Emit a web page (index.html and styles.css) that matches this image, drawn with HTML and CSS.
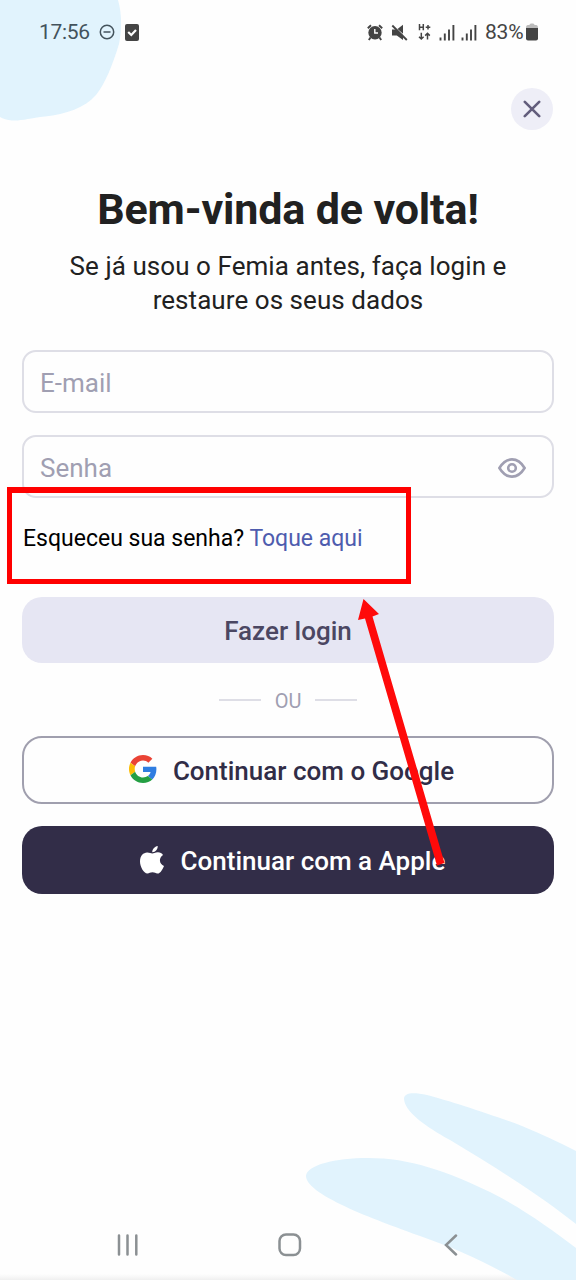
FILE: index.html
```html
<!DOCTYPE html>
<html lang="pt">
<head>
<meta charset="utf-8">
<title>Femia</title>
<link rel="stylesheet" href="styles.css">
</head>
<body>
<div class="screen">
  <svg class="backdrop" viewBox="0 0 576 1280" aria-hidden="true">
    <path d="M0 0H118C122 14 122 30 119 44C113 64 105 84 96 95C85 108 66 114 45 116.500C30 118 22 121 12 120.500C7 120 3 119 0 117Z"/>
    <path d="M404 1099C404 1093 412 1092 427 1095C450 1101 490 1114 522 1126C542 1134 560 1143 576 1151V1224C545 1199 500 1170 450 1140C425 1126 405 1112 404 1099Z"/>
    <path d="M306 1176C307 1165 335 1158 368 1158C410 1158 446 1171 490 1192C522 1208 550 1228 576 1248V1280H517C485 1262 455 1248 420 1236C385 1223 306 1196 306 1176Z"/>
  </svg>

  <header class="status">
    <div class="status-left">
      <span class="clock">17:56</span>
      <svg class="dnd" width="16" height="16" viewBox="0 0 16 16"><circle cx="8" cy="8" r="6.700"/><path d="M4.500 8H11.500"/></svg>
      <svg class="check" width="14" height="17" viewBox="0 0 14 17"><rect width="14" height="17" rx="2" fill="#444"/><path d="M3.200 8L6.300 11L11 6" fill="none" stroke="#fff" stroke-width="2.200"/></svg>
    </div>
    <div class="status-right">
      <svg class="alarm" width="16" height="17" viewBox="0 0 16 17"><circle cx="8" cy="8.800" r="6.700" fill="#444"/><path d="M.8 4.200L4 1.200M15.200 4.200L12 1.200M3.500 13.500L1.800 16M12.500 13.500L14.200 16" stroke="#444" stroke-width="1.900"/><path d="M7.800 5V9H11" fill="none" stroke="#fff" stroke-width="1.400"/></svg>
      <svg class="mute" width="17" height="17" viewBox="0 0 17 17"><path d="M1 5.500H4.500L12 11V16L5.800 11.500H1Z" fill="#444"/><path d="M6.500 5L12 .8V9.800Z" fill="#444"/><path d="M1.300 1.500L15.800 16" stroke="#444" stroke-width="1.900"/></svg>
      <svg class="data" width="13" height="18" viewBox="0 0 13 18"><path d="M1.500 1V7.300M5.300 1V7.300M1.500 4.200H5.300M7.700 4.200H12.300M10 2V6.500M3.300 9.800V16M1 13.700L3.300 16L5.600 13.700M9.500 16.500V10.300M7.200 12.600L9.500 10.300L11.800 12.600" fill="none" stroke="#444" stroke-width="1.500"/></svg>
      <svg class="signal" width="16" height="17" viewBox="0 0 16 17"><path d="M1.500 13.500V16.500M5.800 9.500V16.500M10 5.500V16.500M14.400 1V16.500" stroke="#444" stroke-width="1.900"/></svg>
      <svg class="signal signal-2" width="16" height="17" viewBox="0 0 16 17"><path d="M1.500 13.500V16.500M5.800 9.500V16.500M10 5.500V16.500M14.400 1V16.500" stroke="#444" stroke-width="1.900"/></svg>
      <span class="percent">83%</span>
      <svg class="battery" width="12" height="18" viewBox="0 0 12 18"><path d="M3.500 2Q3.500 .5 5 .5H7Q8.500 .5 8.500 2H10Q12 2 12 5H0Q0 2 2 2Z" fill="#bbb"/><path d="M0 5H12V15.500Q12 17.500 10 17.500H2Q0 17.500 0 15.500Z" fill="#444"/></svg>
    </div>
  </header>

  <div class="toolbar">
    <button class="close" aria-label="Fechar"><svg width="18" height="18" viewBox="0 0 18 18"><path d="M1.800 1.800L16.200 16.200M16.200 1.800L1.800 16.200"/></svg></button>
  </div>

  <main class="content">
    <h1 class="title"><span>Bem-vinda de volta!</span></h1>
    <p class="subtitle">Se já usou o Femia antes, faça login e<br>restaure os seus dados</p>

    <div class="field"><span class="placeholder">E-mail</span></div>
    <div class="field field-password">
      <span class="placeholder">Senha</span>
      <svg class="eye" width="28" height="20" viewBox="0 0 28 20"><path d="M1.400 10C5 4 9 1.400 14 1.400S23 4 26.600 10C23 16 19 18.600 14 18.600S5 16 1.400 10Z"/><circle cx="14" cy="10" r="3.800"/></svg>
    </div>

    <p class="forgot"><span class="question">Esqueceu sua senha?</span> <a class="link">Toque aqui</a></p>

    <button class="btn btn-login"><span>Fazer login</span></button>
    <div class="divider"><i></i><span>OU</span><i></i></div>
    <button class="btn btn-google">
      <svg width="28" height="28" viewBox="0 0 48 48"><path fill="#ea4335" d="M24 9.500c3.540 0 6.710 1.220 9.210 3.600l6.850-6.850C35.900 2.380 30.470 0 24 0 14.620 0 6.510 5.380 2.560 13.220l7.980 6.190C12.430 13.720 17.740 9.500 24 9.500z"/><path fill="#2f7de1" d="M46.980 24.550c0-1.570-.15-3.090-.38-4.550H24v9.020h12.940c-.58 2.960-2.260 5.480-4.780 7.180l7.730 6c4.510-4.180 7.090-10.360 7.090-17.650z"/><path fill="#fbbc05" d="M10.530 28.590c-.48-1.450-.76-2.990-.76-4.590s.27-3.140.76-4.590l-7.980-6.190C.92 16.460 0 20.120 0 24c0 3.880.92 7.540 2.560 10.780l7.970-6.190z"/><path fill="#249f43" d="M24 48c6.480 0 11.930-2.130 15.890-5.810l-7.730-6c-2.150 1.450-4.920 2.300-8.160 2.300-6.260 0-11.570-4.220-13.470-9.910l-7.980 6.190C6.510 42.620 14.620 48 24 48z"/></svg>
      <span>Continuar com o Google</span>
    </button>
    <button class="btn btn-apple">
      <svg width="24" height="28" viewBox="0 0 24 28"><path fill="#fff" d="M17.700 0C18 2.900 15.500 6.200 12.300 6.300C12 3.400 14.700.5 17.700 0ZM12.300 7.500C13.600 7.500 15.300 6.100 18 6.200C20.100 6.300 22 7.200 23 8.900C18.400 11.700 19.200 18 24 19.900C23 22.600 20.500 27.500 17.500 27.500C15.500 27.500 14.800 26.300 12.500 26.300C10.100 26.300 9.300 27.500 7.500 27.500C3.800 27.600 0 20.700 0 15.500C0 9.800 3.500 6.700 7 6.600C9.300 6.500 11 7.500 12.300 7.500Z"/></svg>
      <span>Continuar com a Apple</span>
    </button>
  </main>

  <nav class="navbar">
    <svg width="22" height="22" viewBox="0 0 22 22"><path d="M2 1.500V20.500M10.500 1.500V20.500M19.300 1.500V20.500"/></svg>
    <svg class="home" width="24" height="24" viewBox="0 0 24 24"><rect x="1.500" y="1.500" width="20.500" height="20.500" rx="6.500"/></svg>
    <svg width="14" height="22" viewBox="0 0 14 22"><path d="M12 1.500L2 11L12 20.500"/></svg>
  </nav>

  <div class="highlight"></div>
  <svg class="arrow" viewBox="0 0 576 1280" aria-hidden="true"><path d="M363.500 599L379 614L372.500 616.500L444.500 863L437 865.500L365 618.500L358 620Z"/></svg>
</div>
</body>
</html>
```
FILE: styles.css
```css
* { box-sizing: border-box; }
body { margin: 0; background: #fefefe; font-family: Roboto, sans-serif; }
h1, p { margin: 0; }
button { border: 0; padding: 0; font: inherit; }
svg { display: block; flex: none; }

.screen { position: relative; width: 576px; height: 1280px; overflow: hidden; display: flex; flex-direction: column; background: linear-gradient(#fefefe 1274px, #f0f0f0); isolation: isolate; }
.backdrop { position: absolute; inset: 0; width: 576px; height: 1280px; fill: #e1f3fd; z-index: -1; }

.status { height: 64px; padding: 0 38px 0 39px; display: flex; justify-content: space-between; align-items: center; color: #444; font-size: 21px; line-height: 24px; }
.status-left, .status-right { display: flex; align-items: center; }
.clock { width: 51px; letter-spacing: -.3px; color: #43525c; }
.dnd { margin-left: 9px; fill: none; stroke: #43525c; stroke-width: 1.500; }
.check { margin-left: 10px; }
.alarm { margin-right: 1px; }
.mute { margin-left: 7px; }
.data { margin-left: 10px; }
.signal { margin-left: 8px; }
.signal-2 { margin-left: 6px; }
.percent { margin-left: 8px; width: 38px; letter-spacing: -.2px; }
.battery { margin-left: 3px; }

.toolbar { padding: 24px 23px 0; display: flex; justify-content: flex-end; }
.close { width: 42px; height: 42px; border-radius: 50%; background: #eeeef7; display: grid; place-items: center; }
.close path { stroke: #625d7c; stroke-width: 2.600; stroke-linecap: round; }

.content { padding: 53px 22px 0; display: flex; flex-direction: column; }
.title { text-align: center; font-size: 43px; line-height: 52px; font-weight: 700; letter-spacing: -.15px; color: #212121; white-space: nowrap; }
.subtitle { margin-top: 14px; text-align: center; font-size: 26px; line-height: 34px; letter-spacing: .06px; color: #212121; white-space: nowrap; }

.field { margin-top: 33px; height: 63px; border: 2px solid #dedee6; border-radius: 14px; padding: 2px 26px 0 16px; display: flex; align-items: center; justify-content: space-between; background: #fefefe; }
.field-password { margin-top: 22px; }
.placeholder { font-size: 26px; color: #a09fb2; }
.eye { fill: none; stroke: #a09fb2; stroke-width: 2.600; }

.forgot { margin-top: 26px; padding-left: 1px; font-size: 23px; line-height: 30px; color: #000; white-space: nowrap; }
.link { color: #4e5cae; }

.btn { display: flex; align-items: center; justify-content: center; border-radius: 20px; font-size: 26px; font-weight: 500; white-space: nowrap; }
.btn-login { margin-top: 43px; height: 66px; padding-top: 2px; background: #e6e6f3; color: #4b4762; }
.divider { margin-top: 22px; height: 30px; display: flex; align-items: center; justify-content: center; gap: 14px; font-size: 20px; color: #a09fb2; }
.divider span { padding-top: 2px; }
.divider i { width: 42px; height: 2px; background: #dedee6; }
.btn-google { margin-top: 21px; height: 68px; padding: 2px 0 0 7px; gap: 16px; border: 2px solid #a09fae; background: #fefefe; color: #312d47; }
.btn-google svg { margin-top: -4px; }
.btn-apple { margin-top: 22px; height: 68px; padding: 2px 0 0 9px; gap: 17px; background: #322d48; color: #fff; }
.btn-apple svg { margin-top: -3px; }

.navbar { margin-top: auto; height: 70px; padding: 0 118px 0 117px; display: flex; justify-content: space-between; align-items: center; }
.navbar svg { fill: none; stroke: #8b9093; stroke-width: 2.500; stroke-linecap: round; }
.navbar .home { margin-right: 4px; }

.highlight { position: absolute; left: 7px; top: 487px; width: 404px; height: 97px; border: 5px solid #f00; border-top-width: 6px; }
.arrow { position: absolute; inset: 0; width: 576px; height: 1280px; fill: #ff0a0a; pointer-events: none; }
```
